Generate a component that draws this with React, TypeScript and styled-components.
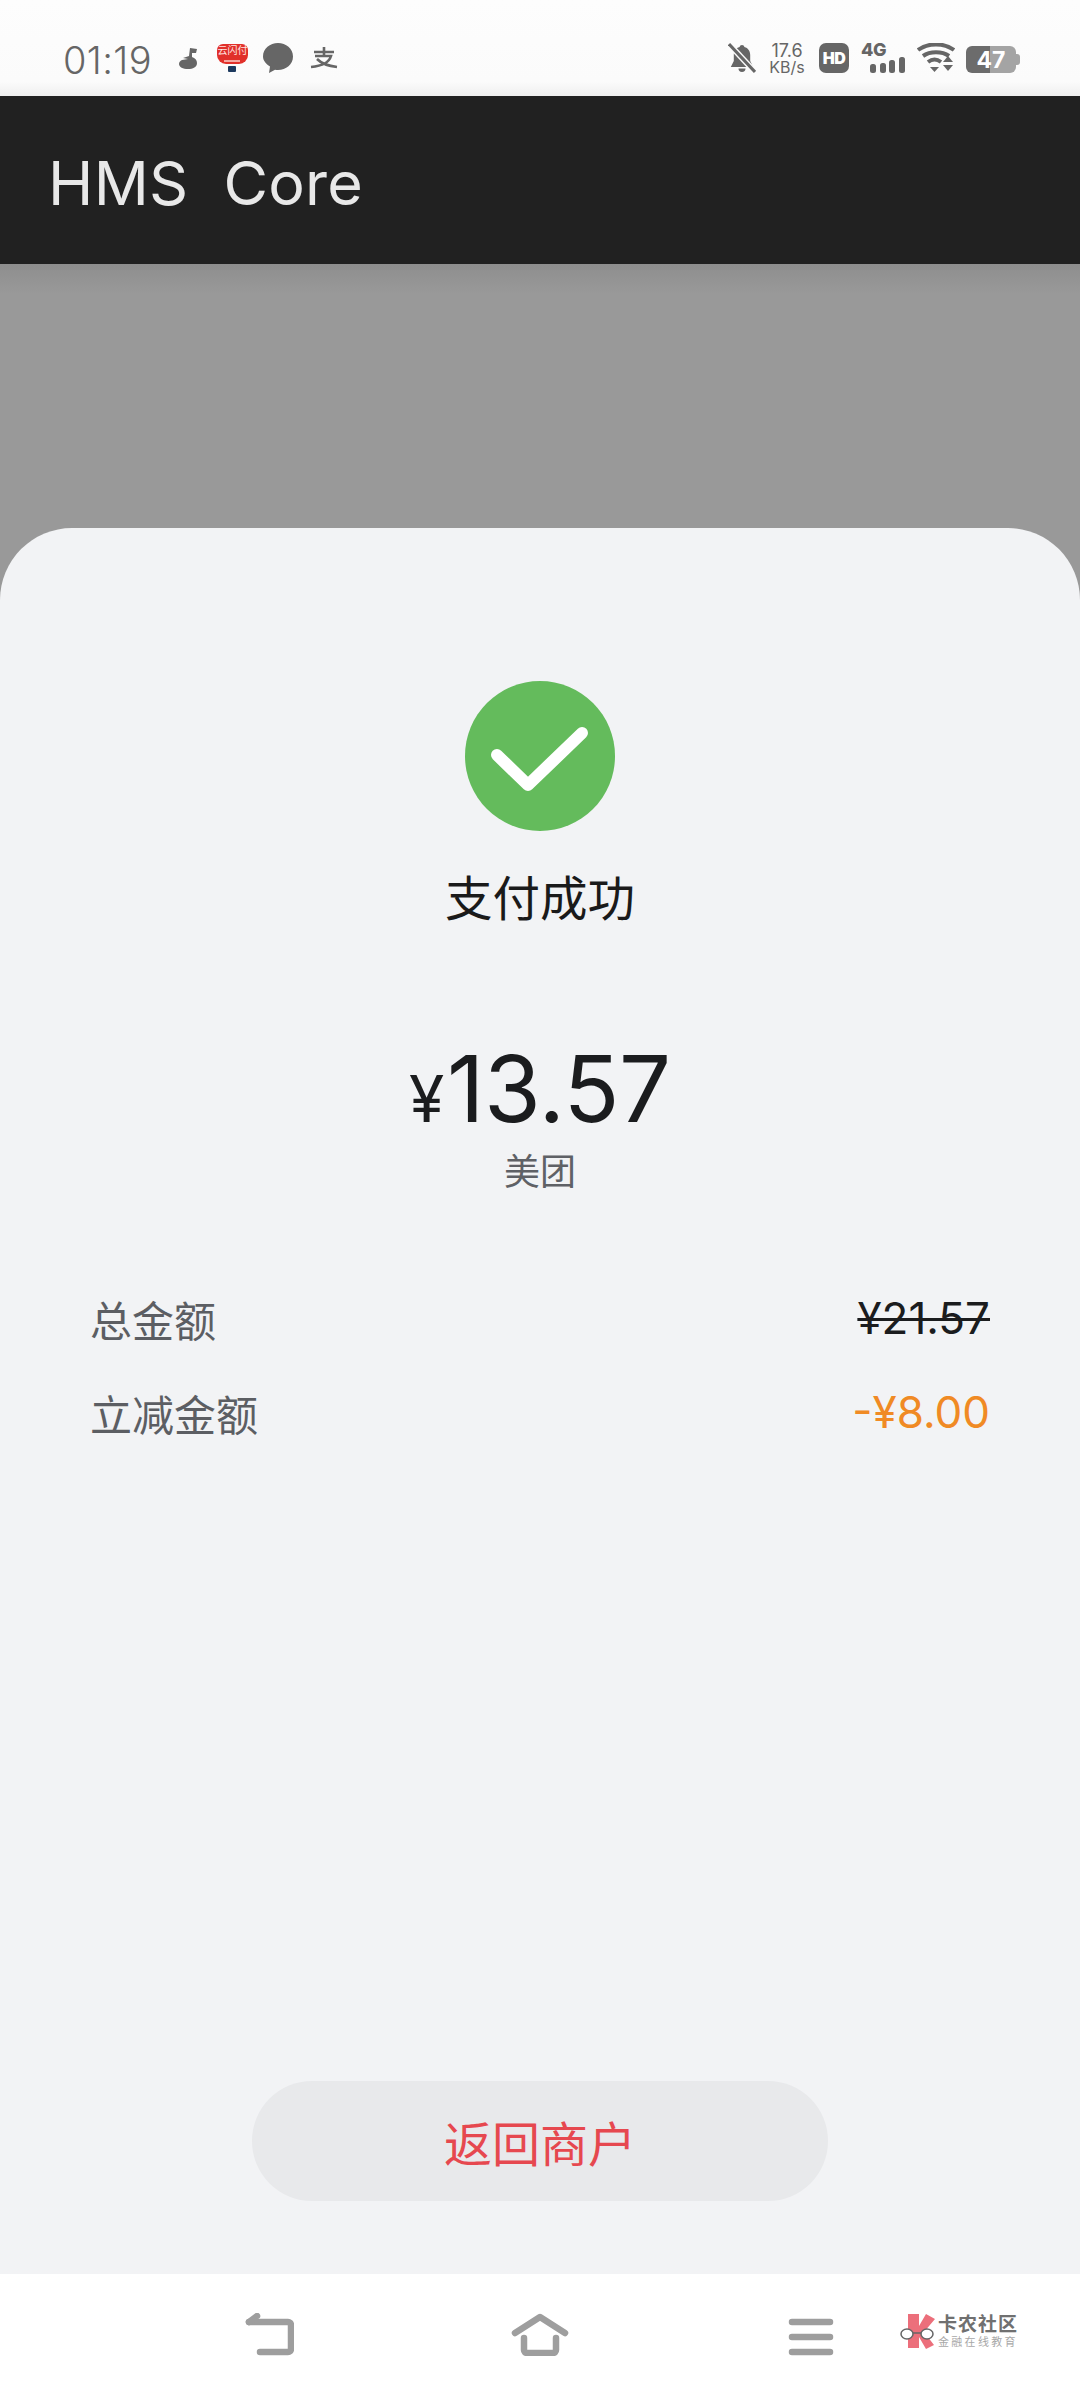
import styled, { createGlobalStyle } from "styled-components";

const Global = createGlobalStyle`
html,body{margin:0;padding:0;background:#fff;}
body{font-family:"Inter","Noto Sans CJK SC",sans-serif;}
`;

const Page = styled.div`
width:1080px;
height:2400px;
display:flex;
flex-direction:column;
overflow:hidden;
`;

const StatusBar = styled.div`
height:96px;
box-sizing:border-box;
padding:20px 60px 0 63px;
background:linear-gradient(#fdfdfd 0%,#fbfbfb 85%,#efefef 100%);
display:flex;
align-items:center;
justify-content:space-between;
color:#666;
`;

const StatusGroup = styled.div`
display:flex;
align-items:center;
`;

const Time = styled.div`
font-size:38px;
font-weight:300;
letter-spacing:0.4px;
width:115px;
margin-top:4px;
`;

const NoteIcon = styled.svg`
margin-right:19px;
`;

const RedApp = styled.div`
width:31px;
height:20px;
border-radius:6px 6px 9px 9px;
background:#e1302a;
color:#ffe6e2;
font-size:10px;
line-height:13px;
text-align:center;
position:relative;
margin:0 15px 9px 0;
white-space:nowrap;
&::before{
content:"";
position:absolute;
left:7px;
bottom:2px;
width:16px;
height:2px;
background:#f4a8a2;
}
&::after{
content:"";
position:absolute;
left:11px;
bottom:-8px;
width:8px;
height:6px;
border-radius:1px;
background:#1d3a5f;
}
`;

const BubbleIcon = styled.svg`
margin-right:17px;
`;

const Speed = styled.div`
font-size:16px;
line-height:15px;
text-align:center;
width:36px;
margin:0 14px 0 13px;
`;

const SpeedTop = styled.div`
font-size:18px;
line-height:18px;
`;

const HdBadge = styled.div`
width:30px;
height:30px;
border-radius:7px;
background:#666;
color:#fff;
font-size:16px;
font-weight:900;
letter-spacing:-0.5px;
display:flex;
align-items:center;
justify-content:center;
margin-right:12px;
`;

const Signal = styled.div`
width:44px;
display:flex;
flex-direction:column;
`;

const SignalLabel = styled.div`
font-size:18px;
line-height:14px;
font-weight:800;
letter-spacing:-0.5px;
`;

const SignalBars = styled.svg`
display:block;
`;

const WifiIcon = styled.svg`
margin:0 11px 0 12px;
`;

const Battery = styled.div`
width:50px;
height:27px;
border-radius:6px;
background:linear-gradient(90deg,#6c6c6c 48%,#a4a4a4 48%);
color:#fff;
font-size:23px;
font-weight:700;
display:flex;
align-items:center;
justify-content:center;
position:relative;
margin:3px 4px 0 0;
&::after{
content:"";
position:absolute;
right:-4px;
top:8px;
width:4px;
height:11px;
border-radius:0 3px 3px 0;
background:#a4a4a4;
}
`;

const AppBar = styled.div`
height:168px;
box-sizing:border-box;
background:#212121;
color:#e8e8e8;
font-size:61px;
letter-spacing:0.3px;
display:flex;
align-items:center;
padding:5px 0 0 48px;
white-space:pre;
`;

const Body = styled.div`
flex:1;
background:linear-gradient(#8e8e8e 0,#999 30px);
padding-top:264px;
display:flex;
flex-direction:column;
`;

const Sheet = styled.div`
flex:1;
background:#f2f3f5;
border-radius:72px 72px 0 0;
display:flex;
flex-direction:column;
align-items:center;
padding-top:153px;
box-sizing:border-box;
`;

const CheckCircle = styled.div`
width:150px;
height:150px;
border-radius:50%;
background:#64bb5c;
display:flex;
align-items:center;
justify-content:center;
`;

const Title = styled.div`
font-size:47.5px;
line-height:60px;
color:#1a1a1a;
margin-top:38px;
`;

const Amount = styled.div`
display:flex;
align-items:baseline;
margin-top:108px;
color:#1b1c1e;
font-size:92px;
line-height:104px;
letter-spacing:-0.3px;
`;

const Yen = styled.span`
font-size:64px;
margin-right:3px;
`;

const Merchant = styled.div`
font-size:36px;
line-height:46px;
color:#5f6166;
margin-top:-2px;
`;

const Rows = styled.div`
width:900px;
margin-top:100px;
display:flex;
flex-direction:column;
gap:48px;
`;

const Row = styled.div`
display:flex;
justify-content:space-between;
align-items:center;
height:46px;
`;

const Label = styled.div`
font-size:42px;
color:#5c5e63;
`;

const Value = styled.div<{ $tone: "strike" | "orange" }>`
font-size:44px;
color:${(p) => (p.$tone === "orange" ? "#f08a24" : "#1b1c1e")};
text-decoration:${(p) => (p.$tone === "strike" ? "line-through" : "none")};
text-decoration-thickness:3px;
`;

const BackButton = styled.div`
margin-top:auto;
margin-bottom:73px;
width:576px;
height:120px;
border-radius:60px;
background:#e8e9eb;
color:#e6484f;
font-size:48px;
display:flex;
align-items:center;
justify-content:center;
`;

const NavBar = styled.div`
height:126px;
box-sizing:border-box;
background:#fff;
display:flex;
align-items:flex-start;
padding:39px 0 0 245px;
`;

const NavIcon = styled.svg<{ $gap: number }>`
display:block;
margin-right:${(p) => p.$gap}px;
`;

const Watermark = styled.div`
display:flex;
align-items:center;
gap:2px;
`;

const WmText = styled.div`
display:flex;
flex-direction:column;
`;

const WmTop = styled.div`
font-size:19px;
line-height:21px;
font-weight:700;
color:#707070;
letter-spacing:1px;
white-space:nowrap;
`;

const WmBottom = styled.div`
font-size:11px;
line-height:14px;
color:#a8a8a8;
letter-spacing:2.3px;
white-space:nowrap;
`;

export default function App() {
  return (
    <Page>
      <Global />
      <StatusBar>
        <StatusGroup>
          <Time>01:19</Time>
          <NoteIcon width="20" height="22" viewBox="0 0 20 22">
            <path d="M12 1l7 1-1 4-4 0 0 4c3 1 5 3 5 6 0 4-4 6-9 6-5 0-9-2-9-5 0-2 1-3 3-4l6-1-5-1 6-2z" fill="#666" />
          </NoteIcon>
          <RedApp>云闪付</RedApp>
          <BubbleIcon width="30" height="30" viewBox="0 0 30 30">
            <path d="M15 0c8 0 15 5.500 15 13.500S23 27 15 27c-1 0-2-.1-3-.3L6 30l1-6.500C3 21 0 17.500 0 13.500 0 5.500 7 0 15 0z" fill="#666" />
          </BubbleIcon>
          <svg width="28" height="22" viewBox="0 0 28 22" fill="none" stroke="#666" strokeWidth="2.600">
            <path d="M4 5h20M14 0v9M5 9h16c-2 7-9 10-20 11M7 12c5 5 11 7 20 8" />
          </svg>
        </StatusGroup>
        <StatusGroup>
          <svg width="28" height="30" viewBox="0 0 28 30">
            <path d="M14 2c1.300 0 2.200.8 2.400 2 3.800 1 5.800 4 5.800 8v6l3 6H2.800l3-6v-6c0-4 2-7 5.800-8 .2-1.200 1.100-2 2.400-2z" fill="#666" />
            <path d="M10.500 25.500h7a3.500 3.500 0 0 1-7 0z" fill="#666" />
            <path d="M1 1l26 28" stroke="#fbfbfb" strokeWidth="6" />
            <path d="M1 1l26 28" stroke="#666" strokeWidth="3" />
          </svg>
          <Speed>
            <SpeedTop>17.6</SpeedTop>
            KB/s
          </Speed>
          <HdBadge>HD</HdBadge>
          <Signal>
            <SignalLabel>4G</SignalLabel>
            <SignalBars width="44" height="16" viewBox="0 0 44 16">
              <rect x="9" y="7" width="6" height="9" rx="2.500" fill="#666" />
              <rect x="19" y="6" width="6" height="10" rx="2.500" fill="#666" />
              <rect x="28" y="3" width="6" height="13" rx="2.500" fill="#666" />
              <rect x="38" y="0" width="6" height="16" rx="2.500" fill="#666" />
            </SignalBars>
          </Signal>
          <WifiIcon width="38" height="30" viewBox="0 0 38 30" fill="none" stroke="#666" strokeWidth="4">
            <path d="M1 7c10-7.500 26-7.500 36 0" />
            <path d="M6 13c7-5 19-5 26 0" />
            <path d="M11 19c4-3 9-3 13 0" />
            <path d="M13 24h9l-4.500 5z" fill="#666" stroke="none" />
            <path d="M26 19h10l-5-6z" fill="#666" stroke="none" />
            <path d="M26 22h10l-5 6z" fill="#666" stroke="none" />
          </WifiIcon>
          <Battery>47</Battery>
        </StatusGroup>
      </StatusBar>
      <AppBar>HMS  Core</AppBar>
      <Body>
        <Sheet>
          <CheckCircle>
            <svg width="150" height="150" viewBox="0 0 150 150" fill="none">
              <path d="M32 74 63 104 117 52" stroke="#fff" strokeWidth="12" strokeLinecap="round" strokeLinejoin="round" />
            </svg>
          </CheckCircle>
          <Title>支付成功</Title>
          <Amount>
            <Yen>¥</Yen>13.57
          </Amount>
          <Merchant>美团</Merchant>
          <Rows>
            <Row>
              <Label>总金额</Label>
              <Value $tone="strike">¥21.57</Value>
            </Row>
            <Row>
              <Label>立减金额</Label>
              <Value $tone="orange">-¥8.00</Value>
            </Row>
          </Rows>
          <BackButton>返回商户</BackButton>
        </Sheet>
      </Body>
      <NavBar>
        <NavIcon $gap={217} width="49" height="43" viewBox="0 0 49 43" fill="none" stroke="#9e9e9e" strokeWidth="6.500" strokeLinejoin="round" strokeLinecap="round">
          <path d="M4 9h39a3 3 0 0 1 3 3v24a3 3 0 0 1-3 3H15" />
          <path d="M12 3 4 9" />
        </NavIcon>
        <NavIcon $gap={219} width="58" height="43" viewBox="0 0 58 43" fill="none" stroke="#9e9e9e" strokeWidth="6.500" strokeLinejoin="round" strokeLinecap="round">
          <path d="M4 20 29 4 54 20" />
          <path d="M13 25v12a3 3 0 0 0 3 3h26a3 3 0 0 0 3-3V25" />
        </NavIcon>
        <NavIcon $gap={66} width="46" height="43" viewBox="0 0 46 43" fill="none" stroke="#9e9e9e" strokeWidth="6.500" strokeLinecap="round">
          <path d="M4 9h38M4 24h38M4 39h38" />
        </NavIcon>
        <Watermark>
          <svg width="36" height="36" viewBox="0 0 36 36">
            <path d="M8 1h11v12l7-12 9 5-11 13 10 13-8 4-7-12v11H8z" fill="#ec6f7b" />
            <ellipse cx="7" cy="21" rx="6" ry="5" fill="#fff" stroke="#666" strokeWidth="1.500" />
            <ellipse cx="27" cy="21" rx="6" ry="5" fill="#fff" stroke="#666" strokeWidth="1.500" />
            <path d="M13 20h8" stroke="#666" strokeWidth="1.500" />
          </svg>
          <WmText>
            <WmTop>卡农社区</WmTop>
            <WmBottom>金融在线教育</WmBottom>
          </WmText>
        </Watermark>
      </NavBar>
    </Page>
  );
}
